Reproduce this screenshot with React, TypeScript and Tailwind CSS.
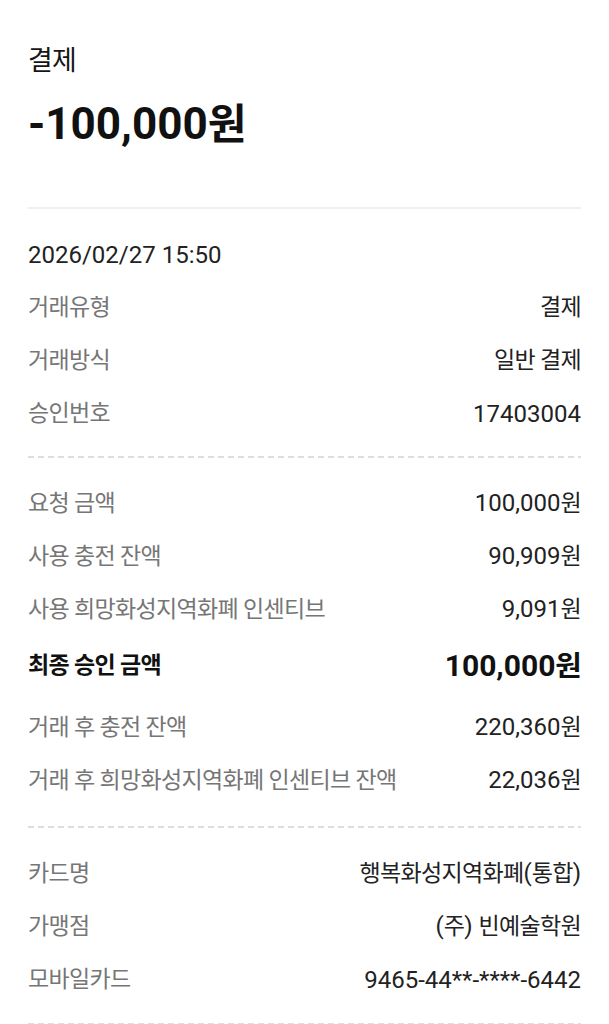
import React from "react";

function T({ s }: { s: string }) {
  const parts = s.split(/([\uAC00-\uD7A3]+(?:\s+[\uAC00-\uD7A3]+)*)/);
  return (
    <>
      {parts.map((p, i) =>
        i % 2 === 1 ? (
          <span key={i} className="text-[0.96em] tracking-[-0.03em]">
            {p}
          </span>
        ) : (
          <React.Fragment key={i}>{p}</React.Fragment>
        )
      )}
    </>
  );
}

function Row({ label, value }: { label: string; value: string }) {
  return (
    <div className="flex h-[53px] items-center justify-between leading-none">
      <span className="text-[24px] text-[#767676]">
        <T s={label} />
      </span>
      <span className="text-[24px] text-[#222222]">
        <T s={value} />
      </span>
    </div>
  );
}

function Dashed() {
  return (
    <div className="h-[2px] w-full bg-[linear-gradient(to_right,#dedede_65%,transparent_65%)] bg-[length:10px_2px] bg-repeat-x" />
  );
}

export default function App() {
  return (
    <div className="min-h-screen bg-white px-[28px] font-[Roboto,'Noto_Sans_CJK_KR',sans-serif]">
      <div className="pt-[44px]">
        <div className="text-[28px] leading-[34px] text-[#151515]">
          <T s="결제" />
        </div>
        <div className="mt-[20px] text-[44px] font-bold leading-[52px] text-[#111111]">
          <T s="-100,000원" />
        </div>
      </div>
      <div className="mt-[56px] h-[2px] w-full bg-[#efefef]" />

      <div className="pt-[19px] pb-[16px]">
        <div className="flex h-[53px] items-center text-[24px] leading-none text-[#222222]">
          2026/02/27 15:50
        </div>
        <Row label="거래유형" value="결제" />
        <Row label="거래방식" value="일반 결제" />
        <Row label="승인번호" value="17403004" />
      </div>
      <Dashed />

      <div className="py-[19px]">
        <Row label="요청 금액" value="100,000원" />
        <Row label="사용 충전 잔액" value="90,909원" />
        <Row label="사용 희망화성지역화폐 인센티브" value="9,091원" />
        <div className="flex h-[65px] items-center justify-between pb-[6px] leading-none">
          <span className="text-[24px] font-bold text-[#111111]">
            <T s="최종 승인 금액" />
          </span>
          <span className="text-[30px] font-bold text-[#111111]">
            <T s="100,000원" />
          </span>
        </div>
        <Row label="거래 후 충전 잔액" value="220,360원" />
        <Row label="거래 후 희망화성지역화폐 인센티브 잔액" value="22,036원" />
      </div>
      <Dashed />

      <div className="pt-[19px] pb-[17px]">
        <Row label="카드명" value="행복화성지역화폐(통합)" />
        <Row label="가맹점" value="(주) 빈예술학원" />
        <Row label="모바일카드" value="9465-44**-****-6442" />
      </div>
      <Dashed />
    </div>
  );
}
